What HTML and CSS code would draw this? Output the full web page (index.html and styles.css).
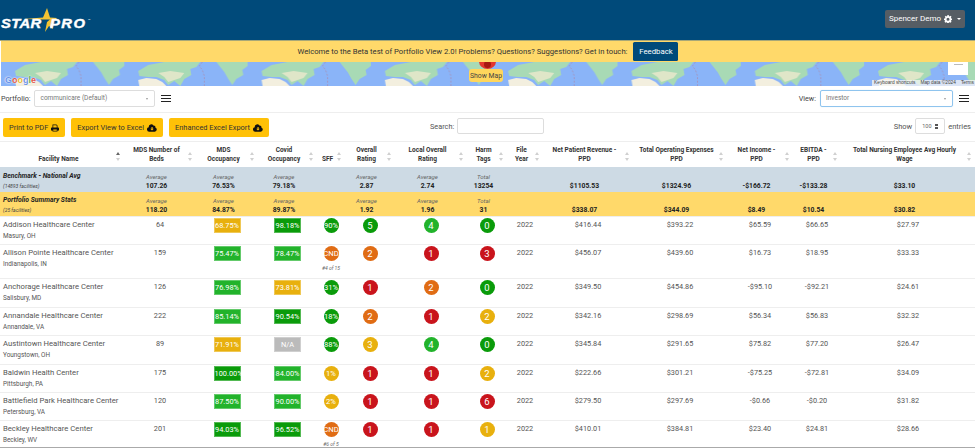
FILE: index.html
```html
<!DOCTYPE html>
<html lang="en">
<head>
<meta charset="utf-8">
<title>StarPro Portfolio View</title>
<link rel="stylesheet" href="styles.css">
</head>
<body>
<div class="page">
  <header class="navbar">
    <div class="logo">
      <svg class="logo-star" viewBox="0 0 36 24" aria-hidden="true">
        <path d="M0 11 L19 9.500 L23 0 L26 9.500 L33 10 L27.500 15 L29 21 L25 18 L21 24 L23 14 L26 11.500 L19 11.500 Z" fill="#f1c232"/>
      </svg>
      <span class="logo-text logo-a">STAR</span><span class="logo-text logo-b">PRO</span><span class="logo-tm">™</span>
    </div>
    <button class="user-btn">Spencer Demo
      <svg class="icon-gear" viewBox="0 0 16 16" aria-hidden="true"><path fill="#fff" fill-rule="evenodd" d="M6.600 0h2.800l.4 2.200 1.300.6L13 1.600l2 2-1.200 1.900.6 1.300 2.200.4v2.800l-2.200.4-.6 1.300 1.200 1.900-2 2-1.900-1.200-1.300.6-.4 2.200H6.600l-.4-2.200-1.300-.6L3 15.600l-2-2 1.200-1.900-.6-1.300L0 10V7.200l2.200-.4.6-1.300L1.600 3.600l2-2 1.900 1.200 1.300-.6zM8 5.500a3 3 0 1 0 0 6 3 3 0 0 0 0-6z"/></svg>
      <span class="caret"></span>
    </button>
  </header>

  <div class="banner">
    <span>Welcome to the Beta test of Portfolio View 2.0! Problems? Questions? Suggestions? Get in touch:</span>
    <button class="feedback">Feedback</button>
  </div>

  <div class="map">
    <svg class="map-art" aria-hidden="true">
      <defs>
        <pattern id="world" x="0" y="0" width="123.300" height="24" patternUnits="userSpaceOnUse">
          <rect width="123.300" height="24" fill="#8ab4f8"/>
          <path d="M14 9 L24 3 L40 0 L76 0 L72 5 L66 7 L67 13 L60 17 L56 24 L50 19 L44 23 L40 18 L32 15 L24 15 L15 14 Z" fill="#a8dab5"/>
          <path d="M34 11 L46 9 L60 11 L56 16 L50 18 L44 20 L40 15 Z" fill="#dfe6c8"/>
          <path d="M14 18 L22 16 L32 17 L38 20 L42 24 L15 24 Z" fill="#f3efdf"/>
          <path d="M92 0 L123.300 0 L123.300 4 L118 8 L119 13 L112 17 L108 23 L104 17 L100 10 L96 5 Z" fill="#a8dab5"/>
          <path d="M78 0 L75 4 L78 8 L80 14 L80 24" fill="none" stroke="#a58fb5" stroke-width="0.800" stroke-dasharray="2 1.500"/>
        </pattern>
      </defs>
      <rect width="100%" height="100%" fill="url(#world)"/>
    </svg>
    <span class="google"><b class="g-b">G</b><b class="g-r">o</b><b class="g-y">o</b><b class="g-b">g</b><b class="g-g">l</b><b class="g-r">e</b></span>
    <span class="marker"><span class="marker-dot"></span></span>
    <button class="show-map">Show Map</button>
    <span class="map-control"><span class="map-control-line"></span></span>
    <span class="map-attrib"><span>Keyboard shortcuts</span><span>Map data ©2024</span><span>Terms</span></span>
  </div>

  <div class="selector-row">
    <div class="selector">
      <label class="sel-label">Portfolio:</label>
      <div class="select select-portfolio">communicare (Default)<span class="sel-arrow"></span></div>
      <span class="burger"><i></i><i></i><i></i></span>
    </div>
    <div class="selector">
      <label class="sel-label">View:</label>
      <div class="select select-view">Investor<span class="sel-arrow"></span></div>
      <span class="burger"><i></i><i></i><i></i></span>
    </div>
  </div>

  <div class="tools">
    <div class="tool-buttons">
      <button class="btn-y">Print to PDF
        <svg class="ico" viewBox="0 0 16 16" aria-hidden="true"><path fill="#111" fill-rule="evenodd" d="M3 1h8l2 2v4h1.500A1.500 1.500 0 0 1 16 8.500V13h-3v2H3v-2H0V8.500A1.500 1.500 0 0 1 1.500 7H3zm1.500 1.500V7h7V3.600L10.400 2.500zM4.500 11v2.500h7V11z"/></svg>
      </button>
      <button class="btn-y">Export View to Excel
        <svg class="ico ico-cloud" viewBox="0 0 20 16" aria-hidden="true"><path fill="#111" fill-rule="evenodd" d="M16.600 7.100A3 3 0 0 0 12.800 3.200 5 5 0 0 0 3.500 5.800v.6A4.500 4.500 0 0 0 4.500 15.300H15.500a4.200 4.200 0 0 0 1.100-8.200zM9 6h2.200v3.500h2.300L10 13.200 6.500 9.500H9z"/></svg>
      </button>
      <button class="btn-y">Enhanced Excel Export
        <svg class="ico ico-cloud" viewBox="0 0 20 16" aria-hidden="true"><path fill="#111" fill-rule="evenodd" d="M16.600 7.100A3 3 0 0 0 12.800 3.200 5 5 0 0 0 3.500 5.800v.6A4.500 4.500 0 0 0 4.500 15.300H15.500a4.200 4.200 0 0 0 1.100-8.200zM9 6h2.200v3.500h2.300L10 13.200 6.500 9.500H9z"/></svg>
      </button>
    </div>
    <div class="search"><label>Search:</label><span class="search-input"></span></div>
    <div class="entries">Show <span class="entries-select">100<span class="updown"></span></span> entries</div>
  </div>

  <table class="grid">
    <colgroup>
      <col class="c-name"><col class="c-beds"><col class="c-mds"><col class="c-covid"><col class="c-sff"><col class="c-over"><col class="c-local"><col class="c-harm"><col class="c-year"><col class="c-npr"><col class="c-toe"><col class="c-ni"><col class="c-ebitda"><col class="c-wage">
    </colgroup>
    <thead>
      <tr>
        <th>Facility Name<span class="sort sort-asc"></span></th>
        <th>MDS Number of<br>Beds<span class="sort"></span></th>
        <th>MDS<br>Occupancy<span class="sort"></span></th>
        <th>Covid<br>Occupancy<span class="sort"></span></th>
        <th>SFF<span class="sort"></span></th>
        <th>Overall<br>Rating<span class="sort"></span></th>
        <th>Local Overall<br>Rating<span class="sort"></span></th>
        <th>Harm<br>Tags<span class="sort"></span></th>
        <th>File<br>Year<span class="sort"></span></th>
        <th>Net Patient Revenue -<br>PPD<span class="sort"></span></th>
        <th>Total Operating Expenses<br>PPD<span class="sort"></span></th>
        <th>Net Income -<br>PPD<span class="sort"></span></th>
        <th>EBITDA -<br>PPD<span class="sort"></span></th>
        <th>Total Nursing Employee Avg Hourly<br>Wage<span class="sort"></span></th>
      </tr>
    </thead>
    <tbody>
      <tr class="sum sum-bench">
        <td class="sum-name"><b>Benchmark - National Avg</b><small>(14893 facilities)</small></td>
        <td><em>Average</em><b>107.26</b></td>
        <td><em>Average</em><b>76.53%</b></td>
        <td><em>Average</em><b>79.18%</b></td>
        <td></td>
        <td><em>Average</em><b>2.87</b></td>
        <td><em>Average</em><b>2.74</b></td>
        <td><em>Total</em><b>13254</b></td>
        <td></td>
        <td><b>$1105.53</b></td>
        <td><b>$1324.96</b></td>
        <td><b>-$166.72</b></td>
        <td><b>-$133.28</b></td>
        <td><b>$33.10</b></td>
      </tr>
      <tr class="sum sum-port">
        <td class="sum-name"><b>Portfolio Summary Stats</b><small>(25 facilities)</small></td>
        <td><em>Average</em><b>118.20</b></td>
        <td><em>Average</em><b>84.87%</b></td>
        <td><em>Average</em><b>89.87%</b></td>
        <td></td>
        <td><em>Average</em><b>1.92</b></td>
        <td><em>Average</em><b>1.96</b></td>
        <td><em>Total</em><b>31</b></td>
        <td></td>
        <td><b>$338.07</b></td>
        <td><b>$344.09</b></td>
        <td><b>$8.49</b></td>
        <td><b>$10.54</b></td>
        <td><b>$30.82</b></td>
      </tr>
      <tr class="row">
        <td class="name">Addison Healthcare Center<small>Masury, OH</small></td><td>64</td>
        <td><span class="pill dg">68.75%</span></td><td><span class="pill g2">98.18%</span></td>
        <td><span class="dot g2 tight">90%</span></td><td><span class="dot g2">5</span></td><td><span class="dot g1">4</span></td><td><span class="dot g2">0</span></td>
        <td>2022</td><td>$416.44</td><td>$393.22</td><td>$65.59</td><td>$66.65</td><td>$27.97</td>
      </tr>
      <tr class="row row-tall">
        <td class="name">Allison Pointe Healthcare Center<small>Indianapolis, IN</small></td><td>159</td>
        <td><span class="pill g1">75.47%</span></td><td><span class="pill g1">78.47%</span></td>
        <td><span class="dot or tight">CND</span><small class="rank">#4 of 15</small></td><td><span class="dot or">2</span></td><td><span class="dot rd">1</span></td><td><span class="dot rd">3</span></td>
        <td>2022</td><td>$456.07</td><td>$439.60</td><td>$16.73</td><td>$18.95</td><td>$33.33</td>
      </tr>
      <tr class="row">
        <td class="name">Anchorage Healthcare Center<small>Salisbury, MD</small></td><td>126</td>
        <td><span class="pill g1">76.98%</span></td><td><span class="pill dg">73.81%</span></td>
        <td><span class="dot g2 tight">31%</span></td><td><span class="dot rd">1</span></td><td><span class="dot or">2</span></td><td><span class="dot g2">0</span></td>
        <td>2022</td><td>$349.50</td><td>$454.86</td><td>-$95.10</td><td>-$92.21</td><td>$24.61</td>
      </tr>
      <tr class="row">
        <td class="name">Annandale Healthcare Center<small>Annandale, VA</small></td><td>222</td>
        <td><span class="pill g1">85.14%</span></td><td><span class="pill g2">90.54%</span></td>
        <td><span class="dot g2 tight">18%</span></td><td><span class="dot or">2</span></td><td><span class="dot rd">1</span></td><td><span class="dot dg">2</span></td>
        <td>2022</td><td>$342.16</td><td>$298.69</td><td>$56.34</td><td>$56.83</td><td>$32.32</td>
      </tr>
      <tr class="row">
        <td class="name">Austintown Healthcare Center<small>Youngstown, OH</small></td><td>89</td>
        <td><span class="pill dg">71.91%</span></td><td><span class="pill na">N/A</span></td>
        <td><span class="dot g2 tight">88%</span></td><td><span class="dot dg">3</span></td><td><span class="dot g1">4</span></td><td><span class="dot g2">0</span></td>
        <td>2022</td><td>$345.84</td><td>$291.65</td><td>$75.82</td><td>$77.20</td><td>$26.47</td>
      </tr>
      <tr class="row">
        <td class="name">Baldwin Health Center<small>Pittsburgh, PA</small></td><td>175</td>
        <td><span class="pill g2">100.00%</span></td><td><span class="pill g1">84.00%</span></td>
        <td><span class="dot dg tight">1%</span></td><td><span class="dot rd">1</span></td><td><span class="dot rd">1</span></td><td><span class="dot dg">2</span></td>
        <td>2022</td><td>$222.66</td><td>$301.21</td><td>-$75.25</td><td>-$72.81</td><td>$34.09</td>
      </tr>
      <tr class="row">
        <td class="name">Battlefield Park Healthcare Center<small>Petersburg, VA</small></td><td>120</td>
        <td><span class="pill g1">87.50%</span></td><td><span class="pill g1">90.00%</span></td>
        <td><span class="dot dg tight">2%</span></td><td><span class="dot rd">1</span></td><td><span class="dot rd">1</span></td><td><span class="dot rd">6</span></td>
        <td>2022</td><td>$279.50</td><td>$297.69</td><td>-$0.66</td><td>-$0.20</td><td>$31.82</td>
      </tr>
      <tr class="row">
        <td class="name">Beckley Healthcare Center<small>Beckley, WV</small></td><td>201</td>
        <td><span class="pill g2">94.03%</span></td><td><span class="pill g2">96.52%</span></td>
        <td><span class="dot or tight">CND</span><small class="rank">#6 of 5</small></td><td><span class="dot rd">1</span></td><td><span class="dot rd">1</span></td><td><span class="dot dg">1</span></td>
        <td>2022</td><td>$410.01</td><td>$384.81</td><td>$23.40</td><td>$24.81</td><td>$28.66</td>
      </tr>
    </tbody>
  </table>
</div>
</body>
</html>
```

FILE: styles.css
```css
* { box-sizing: border-box; }
html, body { margin: 0; padding: 0; background: #fff; }
body { font-family: Roboto, "Open Sans", sans-serif; color: #333; }
.page { width: 975px; height: 448px; overflow: hidden; border-bottom: 1px solid #aaa; }
button { font-family: inherit; border: 0; padding: 0; }

/* navbar */
.navbar { height: 41px; background: #004a7a; display: flex; align-items: center; justify-content: space-between; padding: 0 10px 3px 1px; border-bottom: 1px solid #a8a878; }
.logo { position: relative; display: flex; align-items: center; height: 30px; padding-top: 10px; }
.logo-star { position: absolute; left: 23px; top: 4px; width: 36px; height: 24px; }
.logo-text { position: relative; display: block; font-family: "Liberation Sans", sans-serif; font-weight: 700; font-style: italic; font-size: 12.500px; color: #fff; -webkit-text-stroke: .4px #fff; transform: scaleX(1.180); transform-origin: left; }
.logo-a { width: 49px; letter-spacing: .3px; }
.logo-b { width: 38px; letter-spacing: 1.300px; }
.logo-tm { font-size: 4px; color: #fff; margin-bottom: 6px; }
.user-btn { width: 80px; height: 18px; background: #565d64; color: #fff; border-radius: 2px; font-size: 8px; display: flex; align-items: center; justify-content: center; gap: 3px; }
.icon-gear { width: 8px; height: 8px; }
.caret { width: 0; height: 0; margin-left: 2px; border-left: 2.500px solid transparent; border-right: 2.500px solid transparent; border-top: 2.500px solid #fff; }

/* banner */
.banner { height: 21px; background: #ffd96a; margin-left: 1px; display: flex; align-items: center; justify-content: center; gap: 6px; font-size: 7.680px; color: #333; }
.feedback { width: 45px; height: 19px; background: #004a7a; color: #fff; font-size: 7.800px; border-radius: 1.500px; }

/* map */
.map { position: relative; height: 24px; overflow: hidden; margin-left: 1px; }
.map-art { display: block; width: 100%; height: 100%; }
.google { position: absolute; left: 4px; bottom: 0; font-family: "Liberation Sans", sans-serif; font-size: 9px; line-height: 12px; text-shadow: 0 0 1px #fff, 0 0 2px #fff; }
.google b { font-weight: 700; }
.g-b { color: #6b93e8; }
.g-r { color: #e2574c; }
.g-y { color: #e9b92c; }
.g-g { color: #4fae5f; }
.marker { position: absolute; left: 478px; top: -8px; width: 17px; height: 15px; border-radius: 50%; background: #e2352e; display: flex; align-items: center; justify-content: center; }
.marker-dot { width: 7px; height: 7px; margin-top: 5px; border-radius: 50%; background: #a51812; }
.show-map { position: absolute; left: 468px; top: 7px; width: 34px; height: 13px; background: #ffd65c; border-radius: 3px; font-size: 6.800px; color: #444; }
.map-control { position: absolute; right: 7px; top: -2px; width: 20px; height: 15px; background: #fff; display: flex; justify-content: center; padding-top: 4px; }
.map-control-line { width: 9px; height: 1px; background: #bbb; }
.map-attrib { position: absolute; right: 0; bottom: 0; height: 6px; display: flex; gap: 5px; padding: 0 1px 0 2px; background: rgba(245,245,245,.75); font-family: "Liberation Sans", sans-serif; font-size: 4.800px; line-height: 6px; color: #444; }

/* selectors */
.selector-row { height: 27px; display: flex; align-items: center; justify-content: space-between; border-bottom: 1px solid #eee; padding: 0 6px 1px 1px; }
.selector { display: flex; align-items: center; }
.sel-label { font-size: 7.200px; color: #444; margin-right: 4px; }
.select { position: relative; height: 17px; border: 1px solid #ddd; border-radius: 2px; font-size: 6.500px; color: #777; line-height: 14px; padding-left: 5px; }
.select-portfolio { width: 121px; }
.select-view { width: 133px; border-color: #8fc4ee; box-shadow: 0 0 1px #b9dcf6; }
.sel-arrow { position: absolute; right: 6px; top: 7px; border-left: 1.500px solid transparent; border-right: 1.500px solid transparent; border-top: 2px solid #999; }
.burger { display: flex; flex-direction: column; gap: 1.500px; width: 10px; margin-left: 6px; }
.burger i { display: block; height: 1.500px; background: #222; }

/* tools */
.tools { height: 28px; display: flex; align-items: flex-start; padding: 5px 4px 0 3px; }
.tool-buttons { display: flex; gap: 6px; width: 427px; }
.btn-y { height: 19px; padding: 0 6px; background: #ffc107; color: #333; border-radius: 2px; font-size: 7.400px; display: flex; align-items: center; gap: 3px; white-space: nowrap; }
.ico { width: 8px; height: 8px; }
.ico-cloud { width: 10px; }
.search { display: flex; align-items: center; gap: 3px; font-size: 7.300px; color: #555; width: 114px; }
.search-input { width: 87px; height: 16px; border: 1px solid #ddd; border-radius: 2px; }
.entries { margin-left: auto; display: flex; align-items: center; gap: 3px; height: 16px; font-size: 7.500px; color: #555; }
.entries-select { position: relative; width: 30px; height: 16px; border: 1px solid #ddd; border-radius: 2px; font-size: 5.500px; line-height: 14px; padding-left: 6px; color: #666; }
.updown { position: absolute; right: 6px; top: 5px; width: 3px; height: 5px; background: linear-gradient(#555 40%, transparent 40%, transparent 60%, #555 60%); }

/* table */
.grid { width: 975px; table-layout: fixed; border-collapse: collapse; }
.c-name { width: 124px; } .c-beds { width: 72px; } .c-mds { width: 62px; } .c-covid { width: 59px; }
.c-sff { width: 28px; } .c-over { width: 50px; } .c-local { width: 72px; } .c-harm { width: 40px; }
.c-year { width: 36px; } .c-npr { width: 90px; } .c-toe { width: 94px; } .c-ni { width: 66px; }
.c-ebitda { width: 48px; } .c-wage { width: 134px; }

th { position: relative; height: 25px; padding: 0 7px 2px 0; font-size: 6.500px; line-height: 9.300px; font-weight: 700; color: #333; text-align: center; vertical-align: bottom; white-space: nowrap; border-top: 1px solid #eee; }
.sort { position: absolute; right: 3px; bottom: 6px; width: 5px; height: 9px; }
.sort::before, .sort::after { content: ""; position: absolute; left: 0; border-left: 2.500px solid transparent; border-right: 2.500px solid transparent; }
.sort::before { top: 0; border-bottom: 3px solid #d0d0d0; }
.sort::after { bottom: 0; border-top: 3px solid #d0d0d0; }
.sort-asc::before { border-bottom-color: #666; }

.sum td { height: 25px; padding: 0 7px 1px 0; text-align: center; vertical-align: bottom; line-height: 10px; }
.sum-bench td { background: #cddae4; }
.sum-port td { background: #ffd96a; }
.sum em { display: block; font-size: 6px; color: #666; line-height: 9px; }
.sum b { display: block; font-size: 6.800px; font-weight: 700; color: #222; }
.sum td.sum-name { text-align: left; padding: 0 0 1px 3px; white-space: nowrap; }
.sum-name b { font-style: italic; }
.sum-name small { display: block; font-size: 5px; font-style: italic; line-height: 10px; color: #444; }

.row td { height: 28.400px; padding: 1px 0 0; text-align: center; vertical-align: top; font-size: 7.300px; line-height: 13px; color: #555; border-top: 1px solid #eee; white-space: nowrap; }
.row-tall td { height: 34px; }
.row td.name { text-align: left; padding-left: 3px; font-size: 7.700px; }
.name small { display: block; font-size: 6.400px; line-height: 10px; color: #555; }
.rank { display: block; font-size: 5px; font-style: italic; line-height: 9px; color: #666; margin-top: 3px; white-space: nowrap; }

.pill { display: inline-block; width: 27px; height: 15px; font-size: 7.400px; line-height: 13px; color: #fff; white-space: nowrap; border: 1px solid rgba(255,255,255,.3); }
.dot { display: block; margin: 0 auto; width: 15px; height: 15px; border-radius: 50%; color: #fff; font-size: 9.500px; line-height: 15px; white-space: nowrap; }
.dot.tight { font-size: 7.600px; display: flex; justify-content: center; }
.g1 { background: #22b32b; }
.g2 { background: #0a9b0a; }
.dg { background: #e8b00e; }
.or { background: #e06c14; }
.rd { background: #c9141c; }
.na { background: #bbb; }
```
